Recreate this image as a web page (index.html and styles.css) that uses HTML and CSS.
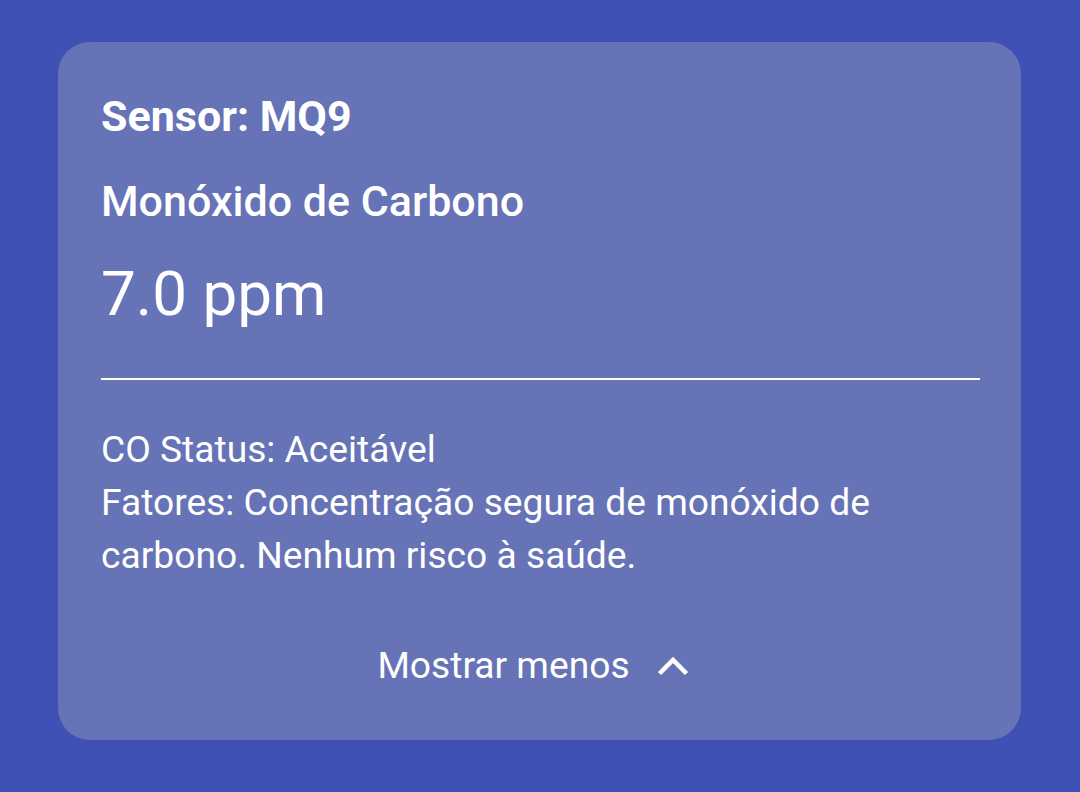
FILE: index.html
```html
<!DOCTYPE html>
<html lang="pt">
<head>
<meta charset="utf-8">
<link rel="stylesheet" href="styles.css">
</head>
<body>
<div class="card">
  <div class="sensor">Sensor: MQ9</div>
  <div class="gas">Monóxido de Carbono</div>
  <div class="value">7.0 ppm</div>
  <div class="divider"></div>
  <div class="details">
    <p>CO Status: Aceitável</p>
    <p>Fatores: Concentração segura de monóxido de carbono. Nenhum risco à saúde.</p>
  </div>
  <div class="toggle">
    <span class="toggle-label">Mostrar menos</span>
    <svg class="chev" width="34" height="22" viewBox="0 0 34 22"><path d="M3.5 18.5 L17 5 L30.5 18.5" fill="none" stroke="#fff" stroke-width="4.5"/></svg>
  </div>
</div>
</body>
</html>
```

FILE: styles.css
```css
html, body {
  margin: 0;
  padding: 0;
}
body {
  background: #3f51b5;
  font-family: Roboto, "Noto Sans", sans-serif;
  color: #fff;
  width: 1080px;
  height: 792px;
  padding: 42px 59px 0 58px;
  box-sizing: border-box;
}
.card {
  background: #6673b6;
  border-radius: 32px;
  height: 698px;
  box-sizing: border-box;
  padding: 53px 41px 0 43px;
  display: flex;
  flex-direction: column;
}
.sensor {
  font-size: 43px;
  font-weight: 700;
  line-height: 1;
}
.gas {
  font-size: 43px;
  font-weight: 500;
  line-height: 1;
  margin-top: 42px;
}
.value {
  font-size: 62px;
  line-height: 1;
  margin-top: 40px;
}
.divider {
  height: 2px;
  background: #fff;
  margin-top: 53px;
}
.details {
  margin-top: 43px;
  font-size: 37.2px;
  line-height: 53px;
}
.details p {
  margin: 0;
}
.toggle {
  margin-top: 65px;
  display: flex;
  justify-content: center;
  align-items: center;
  gap: 26px;
  font-size: 37.2px;
  line-height: 1;
  padding-right: 14px;
}
.toggle-label {
  display: block;
}
.chev {
  display: block;
}
```
